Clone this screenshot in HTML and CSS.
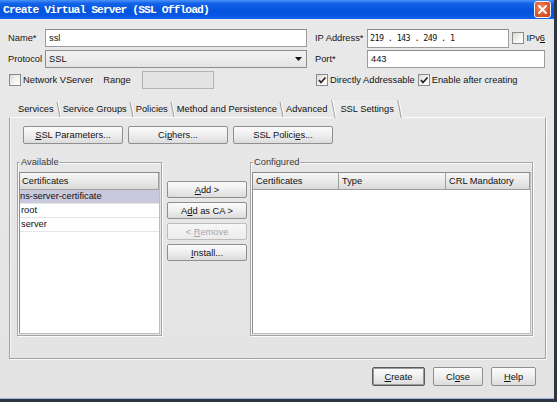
FILE: index.html
```html
<!DOCTYPE html>
<html>
<head>
<meta charset="utf-8">
<link rel="stylesheet" href="styles.css">
</head>
<body>
<div class="window">
  <div class="titlebar">
    <span class="title">Create Virtual Server (SSL Offload)</span>
    <span class="close"><svg width="15" height="15" viewBox="0 0 15 15"><path d="M4 4 L11 11 M11 4 L4 11" stroke="#fff" stroke-width="2" stroke-linecap="round"/></svg></span>
  </div>

  <div class="form">
    <span class="lbl">Name*</span>
    <div class="input">ssl</div>
    <span class="lbl lbl-r">IP Address*</span>
    <div class="iprow">
      <div class="input ip">219 . 143 . 249 . 1</div>
      <span class="cb"></span>
      <span class="ipv6">IPv<u>6</u></span>
    </div>

    <span class="lbl">Protocol</span>
    <div class="select">SSL<svg class="arrow" width="7" height="4" viewBox="0 0 7 4"><path d="M0 0 H7 L3.5 4 Z" fill="#111"/></svg></div>
    <span class="lbl lbl-r">Port*</span>
    <div class="input port">443</div>

    <div class="row3 row3-l">
      <span class="cb"></span>
      <span class="cbtext">Network VServer</span>
      <span class="range-lbl">Range</span>
      <div class="range"></div>
    </div>
    <div class="row3 row3-r">
      <span class="cb on"><svg width="10" height="10" viewBox="0 0 10 10"><path d="M2 5 L4 7.5 L8.5 2.5" fill="none" stroke="#222" stroke-width="1.7"/></svg></span>
      <span class="cbtext">Directly Addressable</span>
      <span class="cb on cb-gap"><svg width="10" height="10" viewBox="0 0 10 10"><path d="M2 5 L4 7.5 L8.5 2.5" fill="none" stroke="#222" stroke-width="1.7"/></svg></span>
      <span class="cbtext">Enable after creating</span>
    </div>
  </div>

  <div class="tabs">
    <span class="tab first">Services</span>
    <span class="tab">Service Groups</span>
    <span class="tab">Policies</span>
    <span class="tab">Method and Persistence</span>
    <span class="tab pre">Advanced</span>
    <span class="tab active">SSL Settings</span>
  </div>

  <div class="panel">
    <div class="btnrow">
      <span class="btn wide"><span><u>S</u>SL Parameters...</span></span>
      <span class="btn wide"><span>Ci<u>p</u>hers...</span></span>
      <span class="btn wide"><span>SSL Polici<u>e</u>s...</span></span>
    </div>

    <div class="lists">
      <div class="group avail">
        <span class="gtitle">Available</span>
        <div class="tbl">
          <div class="thead one"><span class="th">Certificates</span></div>
          <div class="tr sel">ns-server-certificate</div>
          <div class="tr ind">root</div>
          <div class="tr ind">server</div>
        </div>
      </div>

      <div class="mid">
        <span class="btn"><span><u>A</u>dd &gt;</span></span>
        <span class="btn"><span>A<u>d</u>d as CA &gt;</span></span>
        <span class="btn disabled"><span>&lt; <u>R</u>emove</span></span>
        <span class="btn"><span><u>I</u>nstall...</span></span>
      </div>

      <div class="group conf">
        <span class="gtitle">Configured</span>
        <div class="tbl">
          <div class="thead three">
            <span class="th">Certificates</span>
            <span class="th">Type</span>
            <span class="th">CRL Mandatory</span>
          </div>
        </div>
      </div>
    </div>
  </div>

  <div class="footer">
    <span class="btn fbtn create"><span><u>C</u>reate</span></span>
    <span class="btn fbtn close-b"><span>Cl<u>o</u>se</span></span>
    <span class="btn fbtn help"><span><u>H</u>elp</span></span>
  </div>
</div>
</body>
</html>
```

FILE: styles.css
```css
html, body {
  margin: 0;
  padding: 0;
  background: #ffffff;
}

body {
  font-family: "Liberation Sans", Arial, sans-serif;
  font-size: 9.3px;
  color: #141414;
}

u {
  text-decoration-thickness: 1px;
  text-underline-offset: 1px;
}

.window {
  width: 557px;
  height: 402px;
  box-sizing: border-box;
  background: linear-gradient(#e9e9e9, #e3e3e3);
  border-right: 3px solid #2f3542;
  border-bottom: 3px solid #2f3542;
  box-shadow: inset 0 -1px 0 #9fb6dc;
  display: flex;
  flex-direction: column;
}

/* title bar */
.titlebar {
  flex: none;
  height: 19px;
  padding: 0 3px;
  display: flex;
  align-items: center;
  justify-content: space-between;
  background: linear-gradient(#4a92f8 0%, #1263ea 18%, #0553dc 55%, #0858e4 85%, #1a66ec 100%);
}

.title {
  color: #ffffff;
  font-family: "Liberation Mono", "DejaVu Sans Mono", monospace;
  font-weight: bold;
  font-size: 11.3px;
  letter-spacing: -0.9px;
}

.close {
  width: 17px;
  height: 17px;
  box-sizing: border-box;
  border: 1px solid #f4f4f4;
  border-radius: 3px;
  background: radial-gradient(circle at 40% 35%, #f08a63 0%, #e0582c 55%, #c6401a 100%);
  display: flex;
  align-items: center;
  justify-content: center;
}

/* top form */
.form {
  flex: none;
  display: grid;
  grid-template-columns: 37px 262px 60px 178px;
  grid-template-rows: 19px 18px 18px;
  row-gap: 3px;
  padding: 9px 0 0 8px;
  align-items: center;
}

.lbl-r {
  padding-left: 8px;
}

.input {
  height: 18px;
  box-sizing: border-box;
  border: 1px solid #9c9c9c;
  border-top-color: #8a8a8a;
  background: #ffffff;
  padding-left: 3px;
  line-height: 16px;
  color: #111;
}

.iprow {
  display: flex;
  align-items: center;
}

.input.ip {
  width: 143px;
  height: 19px;
  margin-top: 1px;
  padding-left: 2px;
  word-spacing: 0px;
  font-family: "DejaVu Sans Mono", monospace;
  font-size: 8.4px;
  letter-spacing: -0.6px;
}

.iprow .cb {
  margin-left: 3px;
}

.ipv6 {
  margin-left: 2px;
}

.select {
  height: 18px;
  box-sizing: border-box;
  border: 1px solid #8e8e8e;
  background: linear-gradient(#f3f3f3, #e4e4e4);
  padding: 0 4px 0 3px;
  line-height: 16px;
  display: flex;
  align-items: center;
  justify-content: space-between;
}

.row3 {
  display: flex;
  align-items: center;
}

.row3-l {
  grid-column: 1 / 3;
}

.row3-r {
  grid-column: 3 / 5;
  padding-left: 9px;
}

.cb {
  width: 12px;
  height: 12px;
  box-sizing: border-box;
  border: 1px solid #8a8a8a;
  background: linear-gradient(135deg, #d9d9d4, #f6f6f4 60%, #ffffff);
  display: inline-flex;
  align-items: center;
  justify-content: center;
  flex: none;
}

.row3-l .cb {
  margin-left: 1px;
}

.cbtext {
  margin-left: 2px;
}

.cb-gap {
  margin-left: 3px;
}

.range-lbl {
  margin-left: 10px;
}

.range {
  width: 72px;
  height: 18px;
  box-sizing: border-box;
  margin-left: 11px;
  border: 1px solid #b3b3b3;
  background: #e3e3e3;
}

/* tabs */
.tabs {
  flex: none;
  height: 18px;
  margin-top: 10px;
  padding-left: 12px;
  display: flex;
  align-items: flex-end;
  position: relative;
  z-index: 2;
}

.tab {
  position: relative;
  height: 16px;
  line-height: 16px;
  padding: 0 6px 0 3px;
  color: #111;
}

.tab.first {
  padding-left: 6px;
}

.tab::after {
  content: "";
  position: absolute;
  right: 1px;
  top: 1px;
  width: 1px;
  height: 15px;
  background: #9c9c9c;
  box-shadow: 1px 0 0 #ffffff;
  transform: skewX(11deg);
}

.tab.pre::after {
  display: none;
}

.tab.active {
  height: 18px;
  line-height: 18px;
  padding: 0 7px 0 7px;
  margin-bottom: -1px;
  background: linear-gradient(#ececec, #e8e8e8);
}

.tab.active::before {
  content: "";
  position: absolute;
  left: 1px;
  top: 0;
  width: 1px;
  height: 18px;
  background: #ffffff;
  box-shadow: -1px 0 0 #9c9c9c;
  transform: skewX(11deg);
}

.tab.active::after {
  top: 0;
  height: 18px;
}

/* panel */
.panel {
  flex: none;
  width: 537px;
  height: 242px;
  box-sizing: border-box;
  margin-left: 9px;
  border: 1px solid #a2a2a2;
  border-top-color: #fbfbfb;
  box-shadow: 1px 1px 0 #fafafa, inset 1px 0 0 #f4f4f4;
  padding: 8px 0 0 7px;
  position: relative;
  z-index: 1;
}

.btnrow {
  display: flex;
  gap: 5px;
  margin-left: 6px;
}

.btn {
  height: 18px;
  box-sizing: border-box;
  border: 1px solid #8f8f8f;
  border-radius: 2px;
  background: linear-gradient(#fbfbfb, #f0f0f0 45%, #dcdcdc);
  display: flex;
  align-items: center;
  justify-content: center;
  color: #111;
  white-space: nowrap;
}

.btn.wide {
  width: 100px;
}

.lists {
  display: flex;
  margin-top: 18px;
  height: 174px;
}

.group {
  position: relative;
  height: 174px;
  box-sizing: border-box;
  border: 1px solid #a6a6a6;
  box-shadow: inset 1px 1px 0 #fbfbfb, 1px 1px 0 #fbfbfb;
  padding: 9px 1px 1px 1px;
  display: flex;
}

.group.avail {
  width: 145px;
}

.group.conf {
  width: 283px;
}

.gtitle {
  position: absolute;
  top: -7px;
  left: 2px;
  padding: 0 1px;
  line-height: 12px;
  background: #e7e7e7;
  color: #3a3a3a;
}

.tbl {
  flex: 1;
  box-sizing: border-box;
  border: 1px solid #8c8c8c;
  border-right-color: #bdbdbd;
  border-bottom-color: #bdbdbd;
  background: #ffffff;
}

.thead {
  display: grid;
  height: 17px;
}

.thead.one {
  grid-template-columns: 1fr;
}

.thead.three {
  grid-template-columns: 86px 107px 1fr;
}

.th {
  box-sizing: border-box;
  height: 17px;
  line-height: 17px;
  padding-left: 2px;
  background: linear-gradient(#f7f7f7, #e6e6e6 60%, #dadada);
  border-right: 1px solid #9e9e9e;
  border-bottom: 1px solid #9e9e9e;
  color: #111;
}

.thead.three .th {
  padding-left: 3px;
}

.tr {
  height: 13px;
  line-height: 13px;
  border-bottom: 1px solid #e6e6e6;
  color: #111;
}

.tr.ind {
  padding-left: 1px;
}

.tr.sel {
  background: #c9c9dd;
}

.mid {
  width: 80px;
  margin: 0 3px 0 5px;
  padding-top: 19px;
  display: flex;
  flex-direction: column;
  gap: 4px;
}

.mid .btn {
  height: 17px;
}

.btn.disabled {
  color: #a6a6a6;
  border-color: #bcbcbc;
  background: linear-gradient(#f7f7f7, #ebebeb);
}

/* footer */
.footer {
  flex: none;
  display: flex;
  justify-content: flex-end;
  gap: 8px;
  padding-right: 18px;
  margin-top: 8px;
}

.fbtn {
  height: 19px;
}

.create {
  width: 53px;
  border-color: #5a5a5a;
  box-shadow: inset 0 0 0 1px #9a9a9a;
}

.close-b {
  width: 50px;
}

.help {
  width: 45px;
}
```
